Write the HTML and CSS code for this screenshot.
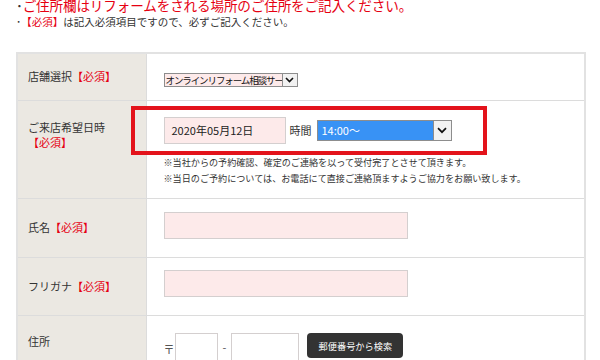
FILE: index.html
```html
<!DOCTYPE html>
<html lang="ja">
<head>
    <meta charset="UTF-8">
    <meta name="viewport" content="width=device-width, initial-scale=1.0">
    <title>ご来店予約</title>
    <link rel="stylesheet" href="styles.css">
</head>
<body>
    <div class="notice">
        <p class="lead"><span class="dot">･</span>ご住所欄はリフォームをされる場所のご住所をご記入ください。</p>
        <p class="sub"><span class="dot">･</span><span class="req">【必須】</span>は記入必須項目ですので、必ずご記入ください。</p>
    </div>

    <div class="form-wrap">
        <table class="form">
            <tr class="row-shop">
                <th>店舗選択<span class="req">【必須】</span></th>
                <td>
                    <div class="fake-select shop-select">
                        <span class="value">オンラインリフォーム相談サー</span>
                        <span class="arrow"><svg width="9" height="6" viewBox="0 0 9 6"><path d="M1 1l3.5 3.5L8 1" fill="none" stroke="#111" stroke-width="1.6"/></svg></span>
                    </div>
                </td>
            </tr>
            <tr class="row-date">
                <th class="top">ご来店希望日時<br><span class="req">【必須】</span></th>
                <td class="top">
                    <div class="date-line">
                        <span class="input date">2020年05月12日</span>
                        <span class="time-label">時間</span>
                        <div class="fake-select time-select">
                            <span class="value">14:00～</span>
                            <span class="arrow"><svg width="10" height="7" viewBox="0 0 10 7"><path d="M1 1.2l4 4 4-4" fill="none" stroke="#111" stroke-width="1.7"/></svg></span>
                        </div>
                    </div>
                    <p class="note">※当社からの予約確認、確定のご連絡を以って受付完了とさせて頂きます。</p>
                    <p class="note">※当日のご予約については、お電話にて直接ご連絡頂ますようご協力をお願い致します。</p>
                </td>
            </tr>
            <tr class="row-name">
                <th>氏名<span class="req">【必須】</span></th>
                <td><span class="input wide"></span></td>
            </tr>
            <tr class="row-kana">
                <th>フリガナ<span class="req">【必須】</span></th>
                <td><span class="input wide"></span></td>
            </tr>
            <tr class="row-address">
                <th class="top">住所</th>
                <td class="top">
                    <div class="zip-line">
                        <span class="zip-mark">〒</span>
                        <span class="input zip1"></span>
                        <span class="dash">-</span>
                        <span class="input zip2"></span>
                        <button class="search-btn">郵便番号から検索</button>
                    </div>
                </td>
            </tr>
        </table>

        <div class="highlight"></div>
    </div>
</body>
</html>
```

FILE: styles.css
```css
* {
    margin: 0;
    padding: 0;
    box-sizing: border-box;
}

body {
    font-family: "Noto Sans CJK JP", "Liberation Sans", sans-serif;
    color: #333;
    background-color: #fff;
    overflow: hidden;
}

.notice {
    padding-left: 16px;
}

.dot {
    color: #333;
}

.lead {
    margin-top: -3px;
    font-size: 13.6px;
    line-height: 17px;
    color: #e60012;
    letter-spacing: -0.15px;
}

.sub {
    margin-top: 1px;
    font-size: 10.5px;
    line-height: 14px;
    color: #333;
}

.req {
    color: #e60012;
}

.form-wrap {
    position: relative;
    margin: 23px 0 0 16px;
    width: 570px;
}

.form {
    width: 570px;
    border-collapse: collapse;
    border: 2px solid #e2e2e2;
}

.form th,
.form td {
    border-bottom: 1px solid #dcdcdc;
    vertical-align: middle;
}

.form th {
    width: 129px;
    padding-left: 10px;
    background-color: #ebe8e2;
    border-right: 1px solid #dcdcdc;
    font-size: 11px;
    font-weight: normal;
    text-align: left;
    line-height: 15px;
    color: #333;
}

.form td {
    padding-left: 17px;
}

.row-shop { height: 47px; }
.row-date { height: 98px; }
.row-name { height: 59px; }
.row-kana { height: 58px; }
.row-address { height: 60px; }

.form .top {
    vertical-align: top;
}

.row-date th {
    padding-top: 19px;
}

.row-date td {
    padding-top: 16px;
}

.row-address th {
    padding-top: 18px;
}

.row-address td {
    padding-top: 17px;
}

.input {
    display: inline-block;
    border: 1px solid #d4cfcf;
    background-color: #fdeaea;
    font-size: 11px;
    color: #222;
}

.fake-select {
    display: inline-flex;
    align-items: stretch;
    border: 1px solid #8d8d8d;
}

.fake-select .value {
    flex: 1;
    display: flex;
    align-items: center;
    white-space: nowrap;
    overflow: hidden;
}

.fake-select .arrow {
    display: flex;
    align-items: center;
    justify-content: center;
    background-color: #f2f2f2;
    border-left: 1px solid #8d8d8d;
}

.shop-select {
    margin-top: 2px;
    width: 134px;
    height: 14px;
    font-size: 9.5px;
    letter-spacing: -1.1px;
}

.shop-select .value {
    background-color: #fdeaea;
    padding-left: 1px;
    color: #111;
}

.shop-select .arrow {
    width: 15px;
}

.date-line {
    display: flex;
    align-items: center;
}

.date {
    width: 122px;
    height: 27px;
    line-height: 25px;
    padding-left: 7px;
}

.time-label {
    margin: 0 5px 0 4px;
    font-size: 11px;
    color: #333;
}

.time-select {
    width: 135px;
    height: 21px;
    font-size: 11px;
}

.time-select .value {
    background-color: #3892f5;
    color: #fff;
    padding-left: 4px;
}

.time-select .arrow {
    width: 18px;
}

.note {
    font-size: 9.1px;
    line-height: 16px;
    color: #333;
    white-space: nowrap;
}

.date-line + .note {
    margin-top: 10px;
}

.wide {
    width: 244px;
    height: 27px;
}

.zip-line {
    display: flex;
    align-items: center;
}

.zip-mark {
    font-size: 11px;
    color: #555;
    margin-top: 4px;
}

.zip1 {
    width: 43px;
    height: 28px;
    background-color: #fff;
}

.zip2 {
    width: 68px;
    height: 28px;
    background-color: #fff;
}

.dash {
    margin: 0 5px;
    font-size: 11px;
    color: #555;
}

.search-btn {
    margin-left: 8px;
    margin-top: -2px;
    width: 96px;
    height: 25px;
    border: none;
    border-radius: 4px;
    background-color: #333;
    color: #fff;
    font-family: "Noto Sans CJK JP", sans-serif;
    font-size: 9.2px;
}

.highlight {
    position: absolute;
    left: 115px;
    top: 54px;
    width: 356px;
    height: 49px;
    border: 4px solid #e3131b;
}
```
